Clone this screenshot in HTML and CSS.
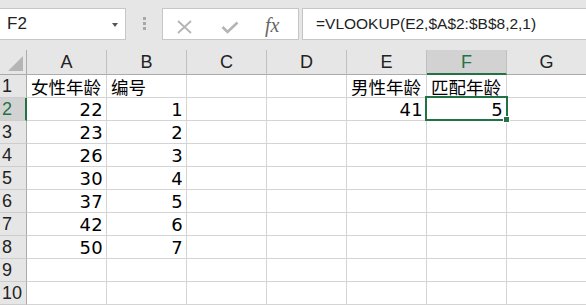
FILE: index.html
```html
<!DOCTYPE html>
<html>
<head>
<meta charset="utf-8">
<link rel="stylesheet" href="styles.css">
</head>
<body>
<div class="toolbar">
  <div class="namebox"><span class="name">F2</span><span class="caret"></span></div>
  <div class="dots"><i></i><i></i><i></i></div>
  <div class="fxpanel">
    <svg class="ic-x" width="15" height="14" viewBox="0 0 15 14"><path d="M1 1 L14 13 M14 1 L1 13" stroke="#b4b4b4" stroke-width="1.8" fill="none"/></svg>
    <svg class="ic-check" width="18" height="13" viewBox="0 0 18 13"><path d="M1.5 6 L6.5 11 L16.5 1.5" stroke="#b4b4b4" stroke-width="2.6" fill="none"/></svg>
    <span class="fx">fx</span>
  </div>
  <div class="formula">=VLOOKUP(E2,$A$2:$B$8,2,1)</div>
</div>
<div class="sheet">
  <div class="grid">
    <div class="hd corner"><span class="tri"></span></div>
    <div class="hd col">A</div><div class="hd col">B</div><div class="hd col">C</div><div class="hd col">D</div><div class="hd col">E</div><div class="hd col sel">F</div><div class="hd col">G</div>

    <div class="hd row">1</div><div class="c t">女性年龄</div><div class="c t">编号</div><div class="c"></div><div class="c"></div><div class="c t">男性年龄</div><div class="c t">匹配年龄</div><div class="c"></div>
    <div class="hd row rsel">2</div><div class="c n">22</div><div class="c n">1</div><div class="c"></div><div class="c"></div><div class="c n">41</div><div class="c n">5</div><div class="c"></div>
    <div class="hd row">3</div><div class="c n">23</div><div class="c n">2</div><div class="c"></div><div class="c"></div><div class="c"></div><div class="c"></div><div class="c"></div>
    <div class="hd row">4</div><div class="c n">26</div><div class="c n">3</div><div class="c"></div><div class="c"></div><div class="c"></div><div class="c"></div><div class="c"></div>
    <div class="hd row">5</div><div class="c n">30</div><div class="c n">4</div><div class="c"></div><div class="c"></div><div class="c"></div><div class="c"></div><div class="c"></div>
    <div class="hd row">6</div><div class="c n">37</div><div class="c n">5</div><div class="c"></div><div class="c"></div><div class="c"></div><div class="c"></div><div class="c"></div>
    <div class="hd row">7</div><div class="c n">42</div><div class="c n">6</div><div class="c"></div><div class="c"></div><div class="c"></div><div class="c"></div><div class="c"></div>
    <div class="hd row">8</div><div class="c n">50</div><div class="c n">7</div><div class="c"></div><div class="c"></div><div class="c"></div><div class="c"></div><div class="c"></div>
    <div class="hd row">9</div><div class="c"></div><div class="c"></div><div class="c"></div><div class="c"></div><div class="c"></div><div class="c"></div><div class="c"></div>
    <div class="hd row">10</div><div class="c"></div><div class="c"></div><div class="c"></div><div class="c"></div><div class="c"></div><div class="c"></div><div class="c"></div>
  </div>
  <div class="selection"><span class="handle"></span></div>
</div>
</body>
</html>
```
FILE: styles.css
```css
html, body {
  margin: 0;
  padding: 0;
  background: #e6e6e6;
  overflow: hidden;
  width: 586px;
  height: 305px;
  font-family: "Liberation Sans", "Noto Sans CJK SC", sans-serif;
  color: #000;
}

.toolbar {
  height: 50px;
  display: flex;
  align-items: flex-start;
}

.namebox {
  margin-top: 8px;
  margin-left: -1px;
  width: 127px;
  height: 32px;
  box-sizing: border-box;
  background: #fff;
  border: 1px solid #c6c6c6;
  display: flex;
  align-items: center;
  justify-content: space-between;
  padding: 0 7px 0 7px;
}

.name {
  font-size: 17px;
  color: #222;
}

.caret {
  width: 0;
  height: 0;
  border-left: 3.5px solid transparent;
  border-right: 3.5px solid transparent;
  border-top: 4px solid #555;
  margin-top: 1px;
}

.dots {
  margin: 17px 16px 0 17px;
  display: flex;
  flex-direction: column;
  gap: 2px;
}

.dots i {
  display: block;
  width: 3px;
  height: 3px;
  background: #a8a8a8;
}

.fxpanel {
  margin-top: 8px;
  width: 137px;
  height: 32px;
  box-sizing: border-box;
  background: #fff;
  border: 1px solid #c6c6c6;
  display: flex;
  align-items: center;
  padding-left: 14px;
}

.ic-x { margin-top: 5px; }
.ic-check { margin-left: 29px; margin-top: 7px; }

.fx {
  margin-left: 26px;
  font-family: "Liberation Serif", serif;
  font-style: italic;
  font-size: 20px;
  color: #666;
  margin-top: 2px;
}

.formula {
  margin-top: 8px;
  margin-left: 3px;
  flex: 1;
  height: 32px;
  box-sizing: border-box;
  background: #fff;
  border: 1px solid #c6c6c6;
  border-right: none;
  font-size: 15.5px;
  color: #222;
  padding-left: 13px;
  line-height: 29px;
}

.sheet {
  position: relative;
}

.grid {
  display: grid;
  grid-template-columns: 27px repeat(7, 80px);
  grid-template-rows: 25px repeat(10, 23px);
  background: #fff;
}

.hd {
  background: #e6e6e6;
  box-sizing: border-box;
  font-size: 18px;
  color: #222;
}

.col {
  border-right: 1px solid #c0c0c0;
  border-bottom: 1px solid #ababab;
  display: flex;
  align-items: center;
  justify-content: center;
  padding-top: 1px;
}

.col.sel {
  background: #d2d2d2;
  color: #217346;
  border-bottom: 2px solid #217346;
  padding-top: 2px;
}

.corner {
  border-right: 1px solid #ababab;
  border-bottom: 1px solid #ababab;
  position: relative;
}

.tri {
  position: absolute;
  right: 3px;
  bottom: 3px;
  width: 0;
  height: 0;
  border-left: 15px solid transparent;
  border-bottom: 15px solid #b5b5b5;
}

.row {
  border-right: 1px solid #ababab;
  border-bottom: 1px solid #cdcdcd;
  display: flex;
  align-items: center;
  padding-left: 2px;
  padding-top: 1px;
}

.row.rsel {
  background: #d2d2d2;
  color: #217346;
  border-right: 2px solid #217346;
}

.c {
  box-sizing: border-box;
  border-right: 1px solid #d4d4d4;
  border-bottom: 1px solid #d4d4d4;
  font-size: 17px;
  display: flex;
  align-items: center;
  padding: 1px 3px 0 4px;
  white-space: nowrap;
  overflow: hidden;
}

.c.n {
  justify-content: flex-end;
  font-family: "DejaVu Sans", sans-serif;
  font-size: 18px;
  letter-spacing: 0.3px;
  padding-right: 3px;
}

.c.t {
  font-family: "Noto Sans CJK SC", sans-serif;
  font-size: 17.5px;
  padding-left: 4px;
  padding-top: 0;
}

.selection {
  position: absolute;
  left: 425px;
  top: 46px;
  width: 83px;
  height: 25px;
  box-sizing: border-box;
  border: 2px solid #217346;
}

.handle {
  position: absolute;
  right: -4px;
  bottom: -4px;
  width: 5px;
  height: 5px;
  background: #217346;
  border: 1px solid #fff;
}
```
